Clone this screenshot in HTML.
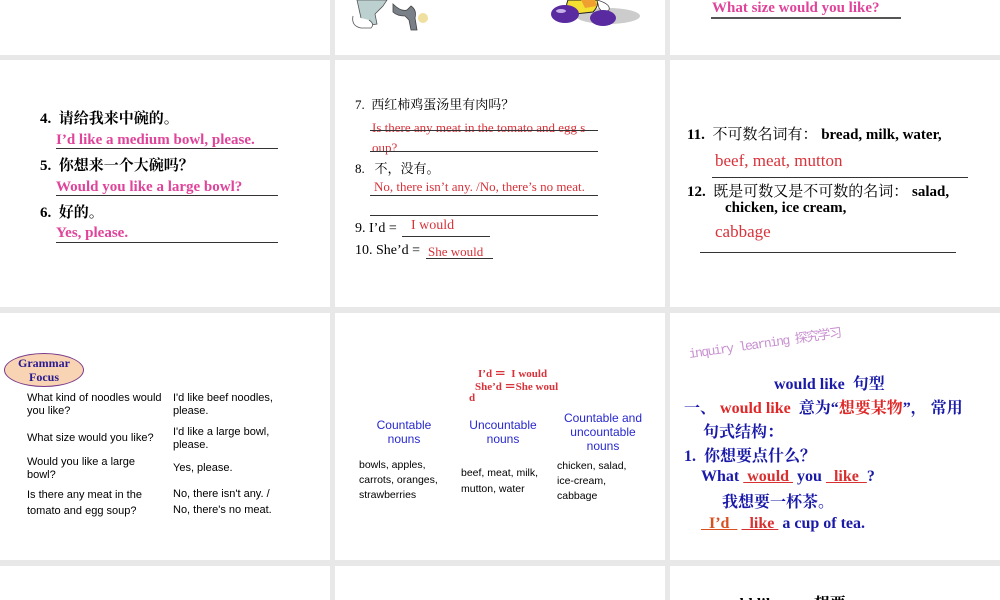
<!DOCTYPE html>
<html><head><meta charset="utf-8"><style>
*{margin:0;padding:0;box-sizing:border-box}
body{width:1000px;height:600px;background:#e8e8e8;position:relative;overflow:hidden;font-family:"Liberation Serif","Noto Serif CJK SC",serif}
.c{position:absolute;background:#fff;overflow:hidden}
.t{position:absolute;white-space:nowrap}
.ln{position:absolute;height:1px;background:#333}
.s{font-family:"Liberation Sans","Noto Sans CJK SC",sans-serif}
.b{font-weight:bold}
.pk{color:#e0449a}
.rd{color:#d8323a}
.nv{color:#1a1aa8}
</style></head><body>
<!-- row 1 -->
<div class="c" style="left:0;top:0;width:330px;height:55px"></div>
<div class="c" style="left:335px;top:0;width:330px;height:55px">
<svg width="330" height="55" style="position:absolute;left:0;top:0">
<path d="M22 0 L26 18 L20 22 L30 26 L42 24 L40 14 L48 6 L52 0 Z" fill="#bcd0d0" stroke="#555" stroke-width=".8"/>
<path d="M18 16 Q16 26 26 28 L36 28 Q40 24 34 20" fill="#fff" stroke="#555" stroke-width=".8"/>
<path d="M58 4 Q66 12 72 10 L76 6 Q82 10 80 18 L82 30 L76 30 L74 20 L70 16 Q62 16 58 12Z" fill="#7a8088" stroke="#444" stroke-width=".8"/>
<ellipse cx="88" cy="18" rx="5" ry="5" fill="#f0e0a0"/>
<ellipse cx="273" cy="16" rx="32" ry="8" fill="#ccc"/>
<path d="M233 0 Q228 12 240 14 L258 12 Q264 6 262 0Z" fill="#f4e030" stroke="#222" stroke-width="1"/>
<path d="M246 0 L250 8 L262 6 L260 0Z" fill="#f0a030"/>
<path d="M262 0 Q276 4 274 10 Q268 14 264 8Z" fill="#fff" stroke="#444" stroke-width=".8"/>
<ellipse cx="230" cy="14" rx="14" ry="9" fill="#5a2aa0"/>
<ellipse cx="268" cy="18" rx="13" ry="8" fill="#5a2aa0"/>
<ellipse cx="226" cy="11" rx="5" ry="2" fill="#c8b0e8"/>
</svg></div>
<div class="c" style="left:670px;top:0;width:330px;height:55px">
<div class="t b pk" style="left:42px;top:0px;font-size:15px">What size would you like?</div>
<div class="ln" style="left:41px;top:17px;width:190px;height:2px;background:#555"></div>
</div>
<!-- row 2 -->
<div class="c" style="left:0;top:60px;width:330px;height:247px">
<div class="t b" style="left:40px;top:47px;font-size:15px">4.&nbsp; 请给我来中碗的。</div>
<div class="t b pk" style="left:56px;top:72px;font-size:15px">I’d like a medium bowl, please.</div>
<div class="ln" style="left:56px;top:88px;width:222px"></div>
<div class="t b" style="left:40px;top:94px;font-size:15px">5.&nbsp; 你想来一个大碗吗？</div>
<div class="t b pk" style="left:56px;top:119px;font-size:15px">Would you like a large bowl?</div>
<div class="ln" style="left:56px;top:135px;width:222px"></div>
<div class="t b" style="left:40px;top:141px;font-size:15px">6.&nbsp; 好的。</div>
<div class="t b pk" style="left:56px;top:165px;font-size:15px">Yes, please.</div>
<div class="ln" style="left:56px;top:182px;width:222px"></div>
</div>
<div class="c" style="left:335px;top:60px;width:330px;height:247px">
<div class="t" style="left:20px;top:34px;font-size:13px">7.&nbsp; 西红柿鸡蛋汤里有肉吗？</div>
<div class="t rd" style="left:37px;top:60px;font-size:13px">Is there any meat in the tomato and egg s</div>
<div class="ln" style="left:35px;top:70px;width:228px"></div>
<div class="t rd" style="left:37px;top:80px;font-size:13px">oup?</div>
<div class="ln" style="left:35px;top:91px;width:228px"></div>
<div class="t" style="left:20px;top:98px;font-size:13px">8.&nbsp;&nbsp; 不，没有。</div>
<div class="t rd" style="left:39px;top:119px;font-size:13px">No, there isn’t any. /No, there’s no meat.</div>
<div class="ln" style="left:35px;top:135px;width:228px"></div>
<div class="ln" style="left:35px;top:155px;width:228px"></div>
<div class="t" style="left:20px;top:161px;font-size:14px">9. I’d = </div>
<div class="t rd" style="left:76px;top:158px;font-size:14px">I would</div>
<div class="ln" style="left:67px;top:176px;width:88px"></div>
<div class="t" style="left:20px;top:183px;font-size:14px">10. She’d = </div>
<div class="t rd" style="left:93px;top:184px;font-size:13px">She would</div>
<div class="ln" style="left:91px;top:198px;width:67px"></div>
</div>
<div class="c" style="left:670px;top:60px;width:330px;height:247px">
<div class="t b" style="left:17px;top:63px;font-size:15px">11.&nbsp; <span style="font-weight:normal">不可数名词有：</span> bread, milk, water,</div>
<div class="t rd" style="left:45px;top:91px;font-size:17px">beef, meat, mutton</div>
<div class="ln" style="left:42px;top:117px;width:256px"></div>
<div class="t b" style="left:17px;top:120px;font-size:15px">12.&nbsp; <span style="font-weight:normal">既是可数又是不可数的名词：</span> salad,</div>
<div class="t b" style="left:55px;top:140px;font-size:15px">chicken, ice cream,</div>
<div class="t rd" style="left:45px;top:162px;font-size:17px">cabbage</div>
<div class="ln" style="left:30px;top:192px;width:256px"></div>
</div>
<!-- row 3 -->
<div class="c s" style="left:0;top:313px;width:330px;height:247px">
<div style="position:absolute;left:4px;top:40px;width:80px;height:34px;border:1.5px solid #7a3a8a;border-radius:50%;background:#f8d4b4"></div>
<div class="t b nv" style="left:4px;top:43px;width:80px;text-align:center;font-size:12px;line-height:14px;font-family:'Liberation Serif',serif;color:#2a1a90">Grammar<br>Focus</div>
<div class="t" style="left:27px;top:79px;font-size:11px;line-height:13px">What kind of noodles would<br>you like?</div>
<div class="t" style="left:173px;top:79px;font-size:11px;line-height:13px">I'd like beef noodles,<br>please.</div>
<div class="t" style="left:27px;top:119px;font-size:11px">What size would you like?</div>
<div class="t" style="left:173px;top:113px;font-size:11px;line-height:13px">I'd like a large bowl,<br>please.</div>
<div class="t" style="left:27px;top:143px;font-size:11px;line-height:13px">Would you like a large<br>bowl?</div>
<div class="t" style="left:173px;top:149px;font-size:11px">Yes, please.</div>
<div class="t" style="left:27px;top:174px;font-size:11px;line-height:16px">Is there any meat in the<br>tomato and egg soup?</div>
<div class="t" style="left:173px;top:173px;font-size:11px;line-height:16px">No, there isn't any. /<br>No, there's no meat.</div>
</div>
<div class="c s" style="left:335px;top:313px;width:330px;height:247px">
<div class="t b rd" style="left:143px;top:52px;font-size:11px;font-family:'Liberation Serif',serif">I’d ＝&nbsp; I would</div>
<div class="t b rd" style="left:140px;top:65px;font-size:11px;font-family:'Liberation Serif',serif">She’d ＝She woul</div>
<div class="t b rd" style="left:134px;top:79px;font-size:11px;font-family:'Liberation Serif',serif">d</div>
<div class="t" style="left:19px;top:105px;width:100px;text-align:center;font-size:12px;line-height:14px;color:#2828d0">Countable<br>nouns</div>
<div class="t" style="left:118px;top:105px;width:100px;text-align:center;font-size:12px;line-height:14px;color:#2828d0">Uncountable<br>nouns</div>
<div class="t" style="left:213px;top:98px;width:110px;text-align:center;font-size:12px;line-height:14px;color:#2828d0">Countable and<br>uncountable<br>nouns</div>
<div class="t" style="left:24px;top:145px;font-size:10.5px;line-height:15px">bowls, apples,<br>carrots, oranges,<br>strawberries</div>
<div class="t" style="left:126px;top:152px;font-size:10.5px;line-height:16px">beef, meat, milk,<br>mutton, water</div>
<div class="t" style="left:222px;top:146px;font-size:10.5px;line-height:15px">chicken, salad,<br>ice-cream,<br>cabbage</div>
</div>
<div class="c" style="left:670px;top:313px;width:330px;height:247px">
<div class="t" style="left:20px;top:30px;font-size:13px;color:#c890d0;font-family:'Liberation Mono','Noto Sans CJK SC',monospace;letter-spacing:-1.5px;transform:rotate(-8deg);transform-origin:left bottom">inquiry learning 探究学习</div>
<div class="t b nv" style="left:104px;top:58px;font-size:16px">would like&nbsp; 句型</div>
<div class="t b nv" style="left:14px;top:82px;font-size:16px">一、 <span style="color:#e02828">would like</span>&nbsp; 意为“<span style="color:#e02828">想要某物</span>”， 常用</div>
<div class="t b nv" style="left:33px;top:106px;font-size:16px">句式结构：</div>
<div class="t b nv" style="left:14px;top:130px;font-size:16px">1.&nbsp; 你想要点什么？</div>
<div class="t b nv" style="left:31px;top:155px;font-size:16px">What <span style="color:#d83030;text-decoration:underline">&nbsp;would&nbsp;</span> you <span style="color:#d83030;text-decoration:underline">&nbsp;&nbsp;like&nbsp;&nbsp;</span>?</div>
<div class="t b nv" style="left:52px;top:176px;font-size:16px">我想要一杯茶。</div>
<div class="t b nv" style="left:31px;top:202px;font-size:16px"><span style="color:#d85020;text-decoration:underline">&nbsp;&nbsp;I’d&nbsp;&nbsp;</span> <span style="color:#d83030;text-decoration:underline">&nbsp;&nbsp;like&nbsp;</span> a cup of tea.</div>
</div>
<!-- row 4 -->
<div class="c" style="left:0;top:566px;width:330px;height:34px"></div>
<div class="c" style="left:335px;top:566px;width:330px;height:34px">
<div class="t" style="left:185px;top:28px;font-size:10px">,</div>
</div>
<div class="c" style="left:670px;top:566px;width:330px;height:34px">
<div class="t b" style="left:41px;top:25px;font-size:16px">would like &nbsp;&nbsp;&nbsp;&nbsp;&nbsp;&nbsp; 想要</div>
</div>
</body></html>
